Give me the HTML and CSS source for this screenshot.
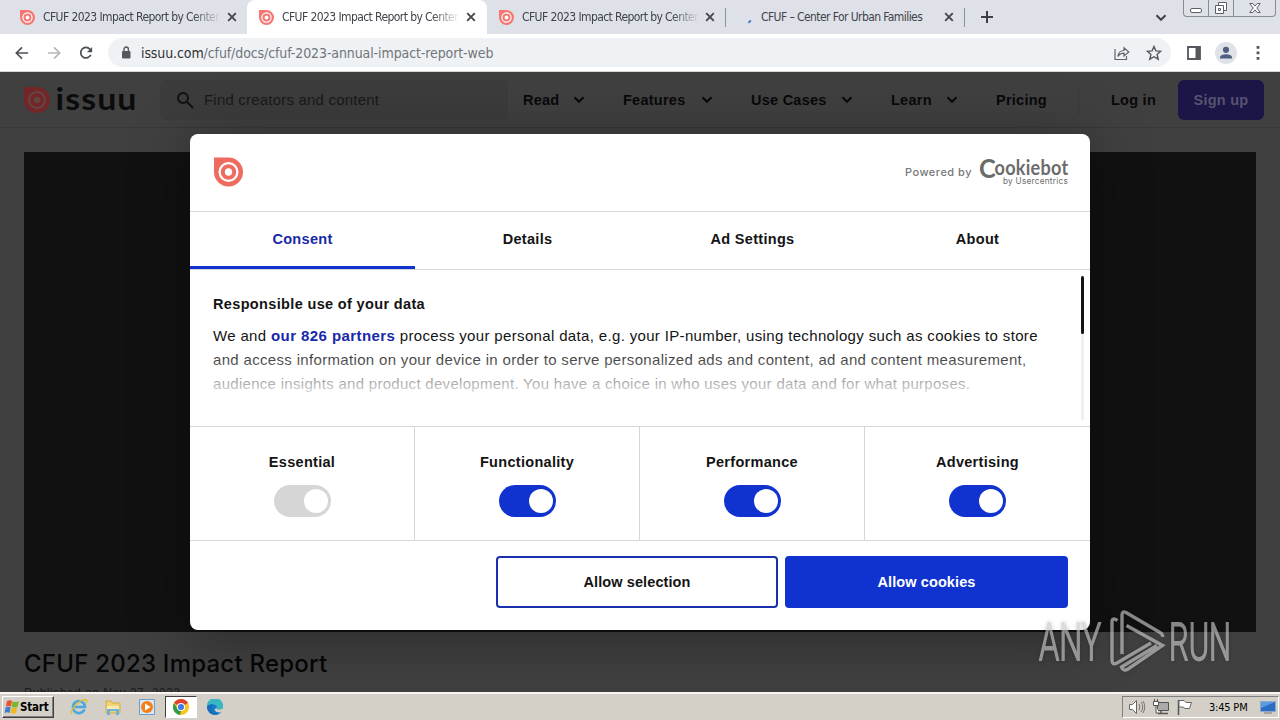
FILE: index.html
```html
<!DOCTYPE html>
<html lang="en">
<head>
    <meta charset="UTF-8">
    <title>CFUF 2023 Impact Report by Center for Urban Families</title>
    <link rel="stylesheet" href="styles.css">
</head>
<body>
    <!-- shared icons -->
    <svg class="sprite" width="0" height="0">
        <symbol id="drop" viewBox="0 0 30 30">
            <path fill="currentColor" d="M0 0h15a15 15 0 1 1-15 15z"/>
            <circle class="ring" cx="15" cy="15" r="9.200"/>
            <circle class="dot" cx="15" cy="15" r="3.800"/>
        </symbol>
        <symbol id="close" viewBox="0 0 10 10">
            <path d="M1.2 1.2l7.6 7.6M8.8 1.2L1.2 8.8" fill="none" stroke="#45484d" stroke-width="1.9"/>
        </symbol>
        <symbol id="chevron" viewBox="0 0 12 8">
            <path d="M2 2l4 4 4-4" fill="none" stroke="currentColor" stroke-width="1.8"/>
        </symbol>
    </svg>

    <div class="tabstrip">
        <div class="tab">
            <svg class="favicon"><use href="#drop"/></svg>
            <span class="tab-title faded">CFUF 2023 Impact Report by Center</span>
            <svg class="tab-close"><use href="#close"/></svg>
        </div>
        <div class="tab active">
            <svg class="favicon"><use href="#drop"/></svg>
            <span class="tab-title faded">CFUF 2023 Impact Report by Center</span>
            <svg class="tab-close"><use href="#close"/></svg>
        </div>
        <div class="tab divided">
            <svg class="favicon"><use href="#drop"/></svg>
            <span class="tab-title faded">CFUF 2023 Impact Report by Center</span>
            <svg class="tab-close"><use href="#close"/></svg>
        </div>
        <div class="tab divided">
            <svg class="favicon" viewBox="0 0 16 16"><path d="M11 13.5q2-.8 2.4-2.5" fill="none" stroke="#3f73c4" stroke-width="2"/></svg>
            <span class="tab-title">CFUF – Center For Urban Families</span>
            <svg class="tab-close"><use href="#close"/></svg>
        </div>
        <svg class="new-tab" viewBox="0 0 12 12"><path d="M6 0v12M0 6h12" stroke="#3c4043" stroke-width="2"/></svg>
        <svg class="tab-search"><use href="#chevron"/></svg>
        <div class="window-buttons">
            <span><svg width="12" height="16" viewBox="0 0 12 16"><rect x=".5" y="8.5" width="11" height="4" rx="1.5" fill="#fff" stroke="#5b6068"/></svg></span>
            <span><svg width="14" height="16" viewBox="0 0 14 16"><path d="M4.5 2.500h8v8h-8z" fill="#fff" stroke="#5b6068"/><path d="M1.500 5.500h8v8h-8zM4.500 8.500h2v2h-2z" fill="#fff" stroke="#5b6068"/></svg></span>
            <span><svg width="12" height="16" viewBox="0 0 12 16"><path d="M.8 3.500h3L6 6l2.200-2.500h3L7.800 8l3.400 4.500h-3L6 10l-2.200 2.500h-3L4.200 8z" fill="#fff" stroke="#5b6068"/></svg></span>
        </div>
    </div>

    <div class="toolbar">
        <svg class="nav-icon" viewBox="0 0 16 16"><path d="M15 8H2M8 1.500L1.500 8 8 14.500" fill="none" stroke="#4d5156" stroke-width="1.900"/></svg>
        <svg class="nav-icon" viewBox="0 0 16 16"><path d="M1 8h13M8 1.500L14.500 8 8 14.500" fill="none" stroke="#b4b6b9" stroke-width="1.900"/></svg>
        <svg class="nav-icon" viewBox="0 0 16 16"><path d="M13.500 10a6 6 0 1 1-1-6.300L14 5.200" fill="none" stroke="#4d5156" stroke-width="2"/><path d="M15 1v6H9z" fill="#4d5156"/></svg>
        <div class="address">
            <svg class="lock" viewBox="0 0 10 13"><rect x="1" y="5" width="8.500" height="7.500" rx="1" fill="#54585d"/><path d="M3 5.500V3.200a2.200 2.200 0 0 1 4.400 0v2.300" fill="none" stroke="#54585d" stroke-width="1.400"/></svg>
            <span class="url"><b>issuu.com</b>/cfuf/docs/cfuf-2023-annual-impact-report-web</span>
            <svg class="share" viewBox="0 0 16 16"><path d="M1 4v10.500h11.500V11M4 11.500C4.500 7 7 5.500 10 5.500V2.800L14.800 7 10 11V8.200C7 8.200 5.500 9 4 11.500z" fill="none" stroke="#5f6368" stroke-width="1.200"/></svg>
            <svg class="star" viewBox="0 0 16 16"><path d="M8 1.500l1.900 4.400 4.800.4-3.600 3.200 1.100 4.700L8 11.700l-4.200 2.500 1.100-4.700-3.600-3.200 4.800-.4z" fill="none" stroke="#54585d" stroke-width="1.400"/></svg>
        </div>
        <svg class="side-panel" viewBox="0 0 14 14"><path d="M1 1h12v12H1z" fill="none" stroke="#54585d" stroke-width="1.800"/><path d="M8.500 1H13v12H8.500z" fill="#54585d"/></svg>
        <svg class="profile" viewBox="0 0 22 22"><circle cx="11" cy="11" r="11" fill="#dfe2e7"/><circle cx="11" cy="7.800" r="3.100" fill="#505f82"/><path d="M5 16.500v-1.500q1-2.800 6-2.800t6 2.800v1.500z" fill="#505f82"/></svg>
        <svg class="menu" viewBox="0 0 4 14"><path d="M.6 0h2.800v2.800H.6zM.6 5.500h2.800v2.800H.6zM.6 11h2.800v2.800H.6z" fill="#54585d"/></svg>
    </div>

    <div class="page">
        <div class="site-header">
            <svg class="site-logo" viewBox="0 0 112 28">
                <use href="#drop" x="0" y="1" width="26" height="26"/>
                <text x="31.500" y="24" textLength="82" lengthAdjust="spacingAndGlyphs">issuu</text>
            </svg>
            <div class="search">
                <svg width="18" height="18" viewBox="0 0 18 18"><circle cx="7" cy="7" r="5" fill="none" stroke="#111" stroke-width="1.900"/><path d="M10.500 10.500L17 17" stroke="#111" stroke-width="2"/></svg>
                <span>Find creators and content</span>
            </div>
            <div class="site-nav">
                <span>Read <svg><use href="#chevron"/></svg></span>
                <span>Features <svg><use href="#chevron"/></svg></span>
                <span>Use Cases <svg><use href="#chevron"/></svg></span>
                <span>Learn <svg><use href="#chevron"/></svg></span>
                <span class="pricing">Pricing</span>
                <span class="login">Log in</span>
                <span class="signup">Sign up</span>
            </div>
        </div>
        <div class="reader"></div>
        <h1>CFUF 2023 Impact Report</h1>
        <p class="published">Published on Nov 27, 2023</p>

        <div class="dialog">
            <div class="dialog-header">
                <svg class="dialog-logo"><use href="#drop"/></svg>
                <span class="powered">Powered by</span>
                <svg class="cookiebot" viewBox="0 0 88 30">
                    <text class="brand brand-c" x="-1" y="21" textLength="17" lengthAdjust="spacingAndGlyphs">C</text>
                    <text class="brand" x="14.500" y="18" textLength="74" lengthAdjust="spacingAndGlyphs">ookiebot</text>
                    <text class="by" x="23" y="27" textLength="65" lengthAdjust="spacingAndGlyphs">by Usercentrics</text>
                </svg>
            </div>
            <div class="dialog-tabs">
                <span class="selected">Consent</span>
                <span>Details</span>
                <span>Ad Settings</span>
                <span>About</span>
            </div>
            <div class="dialog-body">
                <h2>Responsible use of your data</h2>
                <p>
                    <span class="line-1">We and <b>our 826 partners</b> process your personal data, e.g. your IP-number, using technology such as cookies to store</span><br>
                    <span class="line-2">and access information on your device in order to serve personalized ads and content, ad and content measurement,</span><br>
                    <span class="line-3">audience insights and product development. You have a choice in who uses your data and for what purposes.</span>
                </p>
                <div class="fade"></div>
                <div class="scrollbar"><div class="thumb"></div></div>
            </div>
            <div class="categories">
                <div class="category">Essential<span class="switch disabled"></span></div>
                <div class="category">Functionality<span class="switch"></span></div>
                <div class="category">Performance<span class="switch"></span></div>
                <div class="category">Advertising<span class="switch"></span></div>
            </div>
            <div class="dialog-footer">
                <button class="btn">Allow selection</button>
                <button class="btn primary">Allow cookies</button>
            </div>
        </div>

        <svg class="watermark" viewBox="0 0 194 64">
            <text x="1" y="50" textLength="62" lengthAdjust="spacingAndGlyphs">ANY</text>
            <text x="131" y="50" textLength="62" lengthAdjust="spacingAndGlyphs">RUN</text>
            <path d="M79.500 10.500Q74 7 74 12V50Q74 55.500 79 53L113 33"/>
            <path d="M84 44V5Q84 .5 88 2.500L122 22.500Q125 24 124.500 27"/>
            <path d="M88.500 15.500L124.500 35.500 90 59Q85.500 62 83.500 57L119 35.500"/>
        </svg>
    </div>

    <div class="taskbar">
        <div class="start">
            <svg width="16" height="16" viewBox="0 0 16 16">
                <path d="M3 2q3-1.500 5 0L7 7.500q-3-1-5 0z" fill="#e3572b"/>
                <path d="M8.500 2.300q3 1.500 6.500 0L13.500 8q-2.500 1-5.700 0z" fill="#7db52e"/>
                <path d="M1.700 8.200q3-1 5 0L5.500 14q-2.500-1.500-5 0z" fill="#3c7fd0"/>
                <path d="M7.500 8.500q3 1.200 5.700 0L12 14q-3 1.500-5.500 0z" fill="#f4b81f"/>
            </svg>
            <span>Start</span>
        </div>
        <div class="task">
            <svg width="18" height="18" viewBox="0 0 18 18"><path d="M14.500 11.500A6 6 0 1 1 15 9H5" fill="none" stroke="#48a9e0" stroke-width="2.600"/><path d="M2 16C-1 13 10 0 16.500 2q1 1-.5 3" fill="none" stroke="#e8bd35" stroke-width="1.400"/></svg>
        </div>
        <div class="task">
            <svg width="18" height="18" viewBox="0 0 18 18"><path d="M2 3h5l1 2h8v10H2z" fill="#efd375" stroke="#d4ad45"/><path d="M3 8h12v3H3z" fill="#f8eab0"/><path d="M3 17v-6h12v6h-3v-4H6v4z" fill="#69b3dc"/></svg>
        </div>
        <div class="task">
            <svg width="18" height="18" viewBox="0 0 18 18"><path d="M1.500 1.500h15v15h-15z" fill="#d8e8f6" stroke="#6c9dcc"/><circle cx="9" cy="9" r="6" fill="#f28118"/><path d="M7 5.500v7L12.500 9z" fill="#fff"/></svg>
        </div>
        <div class="task pressed">
            <svg width="16" height="16" viewBox="0 0 16 16"><circle cx="8" cy="8" r="8" fill="#f9c51d"/><path d="M8 8L1.100 4A8 8 0 0 1 14.900 4z" fill="#df4233"/><path d="M1.100 4L4.500 10 8 12l-1 4A8 8 0 0 1 1.100 4z" fill="#2e9d4e"/><circle cx="8" cy="8" r="4" fill="#fff"/><circle cx="8" cy="8" r="3.100" fill="#3f7de8"/></svg>
        </div>
        <div class="task">
            <svg width="16" height="16" viewBox="0 0 16 16"><circle cx="8" cy="8" r="8" fill="#1778c8"/><path d="M0 7A8 8 0 0 1 16 7q0 3.500-4 3.500-2 0-2.500-1.200Q10.500 6 6.500 5.500 2 5 0 7z" fill="#39b8c4"/><path d="M9.500 9.300q.5 1.200 2.500 1.200 2 0 3.500-1.500l.5 3-3 1.500q-5 0-5.500-3.500z" fill="#d4d0c8"/><path d="M0 8q2-3.500 6-2.500Q3 9 5 12t7 2.500A8 8 0 0 1 0 8z" fill="#146cba"/></svg>
        </div>
        <div class="tray">
            <svg width="18" height="16" viewBox="0 0 18 16"><path d="M1.500 5.500h3l4-4v13l-4-4h-3z" fill="#fff" stroke="#666"/><path d="M11 5q2 3 0 6M13 3q3.500 5 0 10M15 2q3.500 6 0 12" fill="none" stroke="#777"/></svg>
            <svg width="18" height="16" viewBox="0 0 18 16"><path d="M5.500 3.500h11v8h-11z" fill="#aaa" stroke="#555"/><path d="M9 12v2M6 14.500h10" stroke="#555" stroke-width="1.500"/><path d="M1.500 2.500h5v4h-5zM2.500 0v2M5.500 0v2M4 7v7h3" fill="#fff" stroke="#555"/></svg>
            <svg width="18" height="16" viewBox="0 0 18 16"><path d="M2.500 1v15" stroke="#555" stroke-width="1.500"/><path d="M3 1.500h5l2 2h5.500l-2 6H9l-2-1.500H3z" fill="#fff" stroke="#666"/></svg>
            <span class="clock">3:45 PM</span>
            <svg class="monitor" width="16" height="14" viewBox="0 0 16 14"><path d="M.5 1.500h15v10H.5z" fill="#2b6cc4" stroke="#8fa8c8"/><path d="M1 2h14L1 8z" fill="#5b9be0"/><path d="M4 13h8" stroke="#777"/></svg>
        </div>
    </div>
</body>
</html>
```
FILE: styles.css
```css
* {
    box-sizing: border-box;
}

body {
    margin: 0;
    width: 1280px;
    height: 720px;
    overflow: hidden;
    display: flex;
    flex-direction: column;
    font-family: "Liberation Sans", Arial, sans-serif;
}

svg {
    flex: none;
}

.sprite {
    position: absolute;
}

.ring {
    fill: none;
    stroke: var(--ring, #fff);
    stroke-width: 2.4px;
}

.dot {
    fill: var(--ring, #fff);
}

/* browser tabs */
.tabstrip {
    height: 34px;
    background: #dee1e8;
    display: flex;
    align-items: center;
    padding-left: 8px;
    color: #3f4349;
    font: 12px "DejaVu Sans Condensed", "DejaVu Sans", sans-serif;
}

.tab {
    width: 239px;
    height: 34px;
    padding: 0 10px 0 12px;
    display: flex;
    align-items: center;
}

.tab.active {
    background: #fff;
    border-radius: 8px 8px 0 0;
    width: 240px;
    padding-right: 11px;
}

.tab.divided {
    padding-right: 11px;
    background: linear-gradient(#8b8f96, #8b8f96) right center / 1px 19px no-repeat;
}

.favicon {
    width: 15px;
    height: 15px;
    color: #f57672;
}

.tab-title {
    width: 176px;
    margin-left: 8px;
    overflow: hidden;
    white-space: nowrap;
    font-stretch: condensed;
    letter-spacing: -0.58px;
}

.faded {
    -webkit-mask-image: linear-gradient(90deg, #000 150px, transparent 178px);
}

.tab-close {
    width: 10px;
    height: 10px;
    margin-left: auto;
}

.new-tab {
    width: 12px;
    height: 12px;
    margin-left: 16px;
}

.tab-search {
    width: 14px;
    height: 9px;
    margin-left: auto;
}

.window-buttons {
    display: flex;
    align-self: flex-start;
    width: 93px;
    height: 17px;
    margin: 0 4px 0 15px;
    border: 1px solid #888d95;
    border-top: 0;
    border-radius: 0 0 4px 4px;
}

.window-buttons span {
    width: 25px;
    display: flex;
    justify-content: center;
    border-right: 1px solid #888d95;
}

.window-buttons span:last-child {
    flex: 1;
    border: 0;
}

/* address bar row */
.toolbar {
    height: 38px;
    background: #fff;
    border-bottom: 1px solid #d5d5d5;
    display: flex;
    align-items: center;
    padding-left: 15px;
}

.nav-icon {
    width: 14px;
    height: 14px;
    margin-right: 18px;
}

.address {
    width: 1063px;
    height: 29px;
    margin-left: -3px;
    border-radius: 15px;
    background: #eff2f5;
    display: flex;
    align-items: center;
    padding: 0 9px 0 13px;
}

.lock {
    width: 10px;
    height: 13px;
}

.url {
    margin-left: 10px;
    font: 14px "DejaVu Sans Condensed", "DejaVu Sans", sans-serif;
    font-weight: 200;
    letter-spacing: -0.1px;
    color: #71757b;
}

.url b {
    font-weight: 200;
    color: #303134;
}

.share {
    width: 16px;
    height: 16px;
    margin-left: auto;
}

.star {
    width: 16px;
    height: 16px;
    margin-left: 16px;
}

.side-panel {
    width: 14px;
    height: 14px;
    margin-left: 16px;
}

.profile {
    width: 22px;
    height: 22px;
    margin-left: 14px;
}

.menu {
    width: 4px;
    height: 14px;
    margin-left: 19px;
}

/* dimmed site */
.page {
    position: relative;
    height: 620px;
    overflow: hidden;
    background: #404040;
}

.site-header {
    height: 56px;
    border-bottom: 1px solid #383838;
    display: flex;
    align-items: center;
    padding-left: 24px;
}

.site-logo {
    --ring: #614644;
    width: 112px;
    height: 28px;
    overflow: visible;
    color: #742527;
}

.site-logo text {
    font: 700 31px Lato, sans-serif;
    letter-spacing: 1px;
    fill: #0b0b0b;
}

.search {
    width: 348px;
    height: 40px;
    margin-left: 24px;
    padding-left: 16px;
    border-radius: 6px;
    background: #3c3c3c;
    display: flex;
    align-items: center;
    gap: 10px;
    font-size: 15px;
    letter-spacing: 0.2px;
    color: #191919;
}

.site-nav {
    margin-left: 15px;
    display: grid;
    grid-template-columns: 100px 128px 140px 105px 82px 100px 86px;
    align-items: center;
    font-size: 14.5px;
    font-weight: bold;
    letter-spacing: 0.25px;
    color: #090909;
}

.site-nav span {
    display: flex;
    align-items: center;
    justify-content: space-between;
    padding-right: 37px;
}

.site-nav svg {
    width: 14px;
    height: 9px;
}

.site-nav .login {
    height: 30px;
    padding: 0 0 0 32px;
    border-left: 1px solid #3a3a3a;
}

.site-nav .signup {
    height: 40px;
    padding: 0;
    justify-content: center;
    border-radius: 6px;
    background: #1c1648;
    color: #56536f;
}

.reader {
    height: 480px;
    margin: 24px 24px 0;
    background: #111;
}

h1 {
    margin: 16px 24px 0;
    font: 500 24px/32px Inter, sans-serif;
    letter-spacing: 0.23px;
    color: #060606;
}

.published {
    margin: 4px 24px 0;
    font-size: 12px;
    line-height: 18px;
    letter-spacing: 0.5px;
    color: #1c1c1c;
}

/* consent dialog */
.dialog {
    position: absolute;
    left: 190px;
    top: 62px;
    width: 900px;
    height: 496px;
    border-radius: 8px;
    background: #fff;
    box-shadow: 0 8px 60px rgba(0, 0, 0, 0.35);
    color: #141414;
    font-size: 14.5px;
    letter-spacing: 0.3px;
    display: flex;
    flex-direction: column;
}

.dialog-header {
    height: 78px;
    border-bottom: 1px solid #d6d6d6;
    display: flex;
    align-items: center;
    padding: 0 22px 1px 24px;
}

.dialog-logo {
    width: 29px;
    height: 30px;
    color: #ef6b60;
}

.powered {
    margin-left: auto;
    font: 500 11px Inter, sans-serif;
    letter-spacing: 0.5px;
    color: #777;
}

.cookiebot {
    width: 88px;
    height: 30px;
    margin-left: 8px;
    overflow: visible;
    fill: #6b6b6b;
}

.brand {
    font: bold 21px Lato, sans-serif;
}

.brand-c {
    font-size: 26px;
}

.by {
    font: 9px Inter, sans-serif;
}

.dialog-tabs {
    height: 58px;
    display: grid;
    grid-template-columns: repeat(4, 1fr);
    border-bottom: 1px solid #d6d6d6;
    text-align: center;
    font-weight: bold;
    line-height: 54px;
}

.dialog-tabs .selected {
    border-bottom: 3px solid #1032cf;
    color: #1729a8;
}

.dialog-body {
    position: relative;
    height: 156px;
    padding: 22px 23px 0;
}

.dialog-body h2 {
    margin: 0 0 8px;
    font-size: 14.5px;
    line-height: 24px;
    letter-spacing: 0.35px;
}

.dialog-body p {
    margin: 0;
    font-size: 15px;
    line-height: 24px;
    white-space: nowrap;
}

.dialog-body b {
    color: #1729a8;
}

.line-1 {
    letter-spacing: 0.345px;
}

.line-1 b {
    letter-spacing: 0.42px;
}

.line-2 {
    letter-spacing: 0.33px;
}

.line-3 {
    letter-spacing: 0.295px;
}

.fade {
    position: absolute;
    left: 0;
    right: 20px;
    bottom: 24px;
    height: 54px;
    background: linear-gradient(rgba(255, 255, 255, 0), #fff);
}

.scrollbar {
    position: absolute;
    right: 6px;
    top: 6px;
    width: 3px;
    height: 144px;
    background: #f0f0f0;
}

.thumb {
    height: 58px;
    border-radius: 2px;
    background: #141414;
}

.categories {
    height: 115px;
    border-top: 1px solid #d6d6d6;
    border-bottom: 1px solid #d6d6d6;
    display: grid;
    grid-template-columns: repeat(4, 1fr);
}

.category {
    display: flex;
    flex-direction: column;
    align-items: center;
    padding-top: 23px;
    border-right: 1px solid #d6d6d6;
    font-weight: bold;
    line-height: 24px;
}

.category:last-child {
    border-right: 0;
}

.switch {
    width: 57px;
    height: 32px;
    margin-top: 11px;
    padding: 4px 3px;
    border-radius: 16px;
    background: #1032cf;
    display: flex;
    justify-content: flex-end;
}

.switch::after {
    content: "";
    width: 24px;
    height: 24px;
    border-radius: 50%;
    background: #fff;
}

.switch.disabled {
    background: #d6d6d6;
}

.dialog-footer {
    display: flex;
    justify-content: flex-end;
    gap: 7px;
    padding: 15px 22px 0;
}

.btn {
    width: 282px;
    height: 52px;
    padding-bottom: 1px;
    border: 2px solid #1a2fae;
    border-radius: 4px;
    background: #fff;
    color: #141414;
    font: bold 14.5px "Liberation Sans", Arial, sans-serif;
    letter-spacing: 0.1px;
}

.btn.primary {
    width: 283px;
    border-color: #1032cf;
    background: #1032cf;
    color: #fff;
}

.watermark {
    position: absolute;
    left: 1038px;
    top: 538px;
    width: 194px;
    height: 64px;
    opacity: 0.65;
    filter: drop-shadow(0 0 2px rgba(0, 0, 0, 0.3));
}

.watermark text {
    font: 300 52px Roboto, sans-serif;
    fill: #c8c8c8;
    stroke: #c8c8c8;
    stroke-width: 1.8px;
}

.watermark path {
    fill: none;
    stroke: #c8c8c8;
    stroke-width: 3.4px;
}

/* taskbar */
.taskbar {
    height: 28px;
    background: #d4d0c8;
    border-top: 2px solid #f6f5f2;
    display: flex;
    align-items: center;
    padding-left: 2px;
    font-family: "DejaVu Sans Condensed", "DejaVu Sans", sans-serif;
}

.start {
    width: 52px;
    height: 22px;
    margin-right: 9px;
    display: flex;
    align-items: center;
    padding-left: 1px;
    border: 1px solid;
    border-color: #fff #404040 #404040 #fff;
    box-shadow: inset -1px -1px #808080;
    font-size: 11.5px;
    font-weight: bold;
    letter-spacing: -0.2px;
}

.task {
    width: 32px;
    height: 22px;
    margin-right: 2px;
    display: flex;
    align-items: center;
    justify-content: center;
}

.task.pressed {
    background: #fff;
    border: 1px solid;
    border-color: #404040 #fff #fff #404040;
}

.tray {
    width: 157px;
    height: 22px;
    margin-left: auto;
    margin-right: 1px;
    padding-left: 5px;
    border: 1px solid;
    border-color: #808080 #fff #fff #808080;
    display: flex;
    align-items: center;
    gap: 6px;
}

.clock {
    margin-left: 9px;
    width: 45px;
    white-space: nowrap;
    font-size: 11px;
    letter-spacing: -0.2px;
}
```
